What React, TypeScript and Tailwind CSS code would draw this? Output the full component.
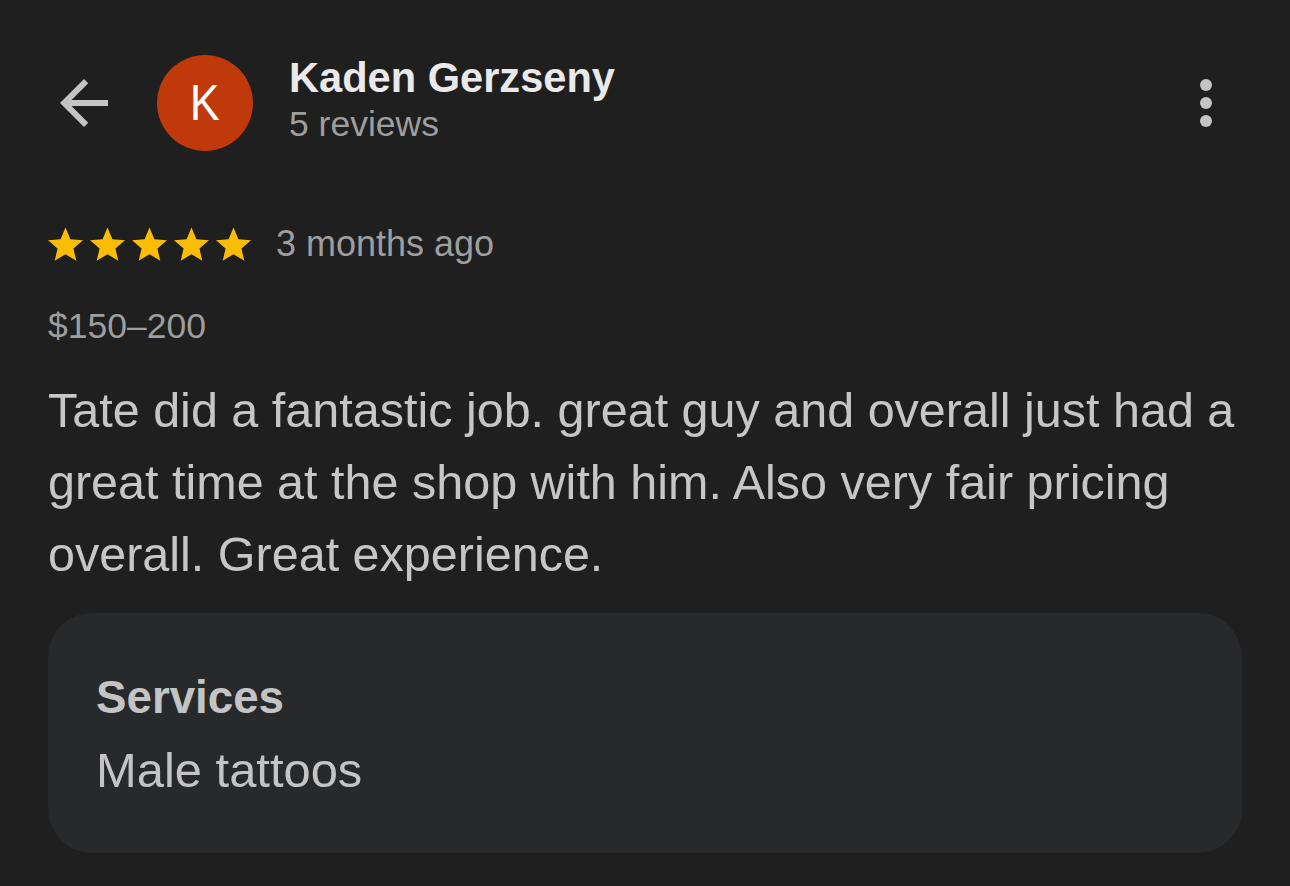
import React from "react";

const font = { fontFamily: '"Liberation Sans", Arial, sans-serif' };

function Star() {
  return (
    <svg viewBox="2 2 20 19.3" className="w-[35px] h-[35px]" fill="#fbbc04">
      <path d="M12 17.27L18.18 21l-1.64-7.03L22 9.24l-7.19-.61L12 2 9.19 8.63 2 9.24l5.46 4.73L5.82 21z" />
    </svg>
  );
}

export default function App() {
  return (
    <div
      className="w-[1290px] h-[886px] bg-[#1f1f1f] overflow-hidden px-12 pt-[55px]"
      style={font}
    >
      {/* header */}
      <div className="flex items-center h-[96px]">
        <button className="w-[72px] h-[72px] flex items-center justify-center">
          <svg viewBox="0 0 24 24" className="w-[72px] h-[72px]" fill="#c4c4c4">
            <path d="M20 11H7.83l5.59-5.59L12 4l-8 8 8 8 1.41-1.41L7.83 13H20v-2z" />
          </svg>
        </button>
        <div className="ml-[37px] w-[96px] h-[96px] shrink-0 rounded-full bg-[#c0390b] flex items-center justify-center text-white text-[50px] leading-none">
          <span className="inline-block scale-x-90">K</span>
        </div>
        <div className="ml-[36px] flex-1 -mt-[6px]">
          <div className="text-[#e9e9e9] text-[41.6px] leading-[48px] font-bold">
            Kaden Gerzseny
          </div>
          <div className="text-[#9e9e9e] text-[35.5px] leading-[44px]">5 reviews</div>
        </div>
        <button className="w-[72px] h-[72px] flex flex-col items-center justify-center gap-[6px]">
          <span className="w-[12px] h-[12px] rounded-full bg-[#c4c4c4]" />
          <span className="w-[12px] h-[12px] rounded-full bg-[#c4c4c4]" />
          <span className="w-[12px] h-[12px] rounded-full bg-[#c4c4c4]" />
        </button>
      </div>

      {/* rating */}
      <div className="mt-[71px] flex items-center">
        <div className="flex gap-[7px]">
          <Star />
          <Star />
          <Star />
          <Star />
          <Star />
        </div>
        <span className="ml-[25px] text-[#9e9e9e] text-[36px] leading-[44px]">
          3 months ago
        </span>
      </div>

      <div className="mt-[38px] text-[#9e9e9e] text-[35.5px] leading-[44px]">$150–200</div>

      <p className="mt-[26px] text-[#c6c6c6] text-[48.5px] leading-[72px]">
        Tate did a fantastic job. great guy and overall just had a great time at the
        shop with him. Also very fair pricing overall. Great experience.
      </p>

      {/* services card */}
      <div className="mt-[23px] rounded-[44px] bg-[#28292b] pl-[48px] pr-12 pt-[57px] pb-[51px]">
        <div className="text-[#c4c4c4] text-[45.7px] leading-[56px] font-bold">Services</div>
        <div className="mt-3 text-[#c4c4c4] text-[48.9px] leading-[64px]">Male tattoos</div>
      </div>
    </div>
  );
}
